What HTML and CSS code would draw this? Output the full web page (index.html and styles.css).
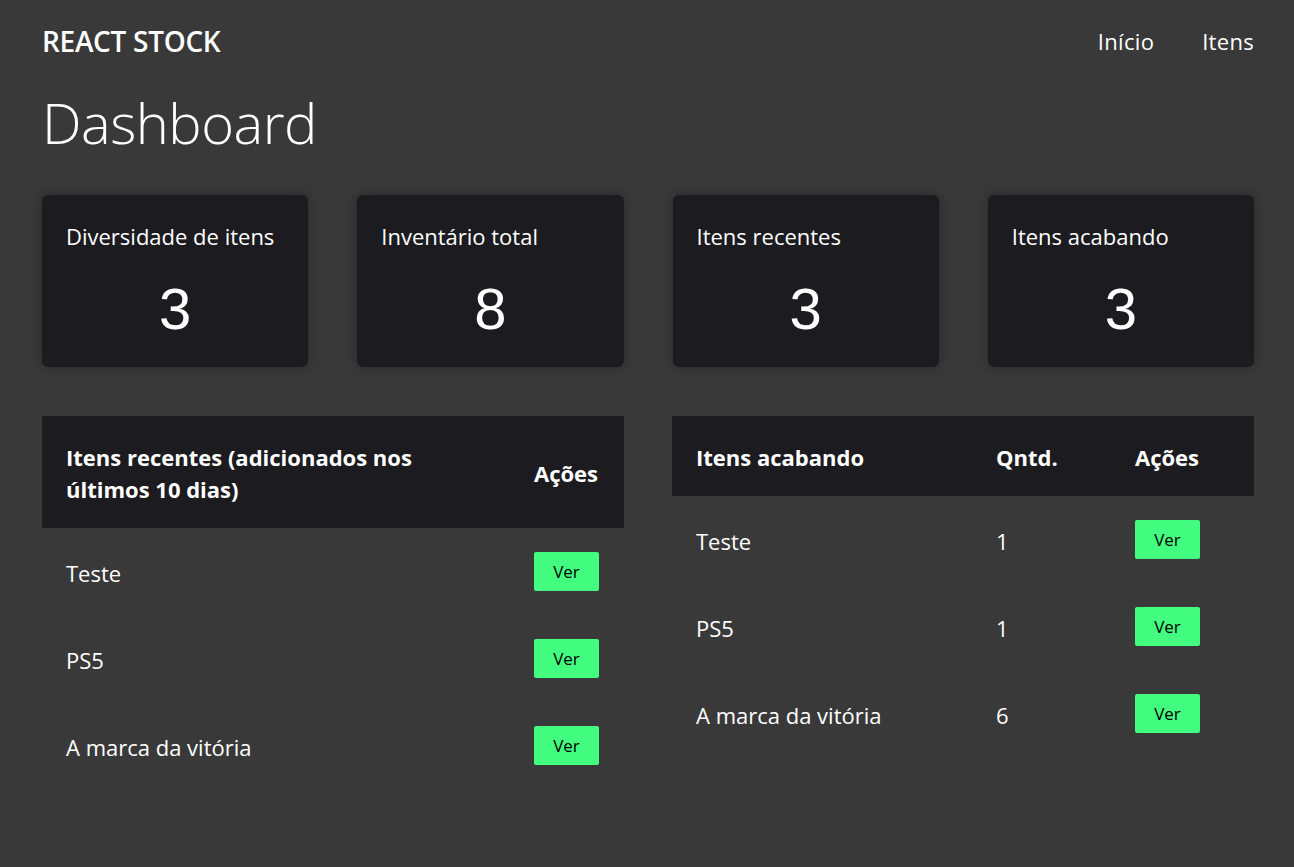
FILE: index.html
```html
<!DOCTYPE html>
<html lang="pt-BR">
<head>
<meta charset="utf-8">
<title>React Stock</title>
<link rel="stylesheet" href="styles.css">
</head>
<body>
<div class="container">
  <header class="topbar">
    <div class="logo">REACT STOCK</div>
    <nav class="nav">
      <a href="#">Início</a>
      <a href="#">Itens</a>
    </nav>
  </header>
  <h1 class="title">Dashboard</h1>
  <section class="cards">
    <div class="card"><div class="card-title">Diversidade de itens</div><div class="card-num">3</div></div>
    <div class="card"><div class="card-title">Inventário total</div><div class="card-num">8</div></div>
    <div class="card"><div class="card-title">Itens recentes</div><div class="card-num">3</div></div>
    <div class="card"><div class="card-title">Itens acabando</div><div class="card-num">3</div></div>
  </section>
  <section class="tables">
    <table class="tbl">
      <thead><tr><th>Itens recentes (adicionados nos últimos 10 dias)</th><th class="act">Ações</th></tr></thead>
      <tbody>
        <tr><td>Teste</td><td class="act"><button class="btn">Ver</button></td></tr>
        <tr><td>PS5</td><td class="act"><button class="btn">Ver</button></td></tr>
        <tr><td>A marca da vitória</td><td class="act"><button class="btn">Ver</button></td></tr>
      </tbody>
    </table>
    <table class="tbl tbl-right">
      <thead><tr><th class="c1">Itens acabando</th><th class="c2">Qntd.</th><th class="c3">Ações</th></tr></thead>
      <tbody>
        <tr><td>Teste</td><td>1</td><td><button class="btn">Ver</button></td></tr>
        <tr><td>PS5</td><td>1</td><td><button class="btn">Ver</button></td></tr>
        <tr><td>A marca da vitória</td><td>6</td><td><button class="btn">Ver</button></td></tr>
      </tbody>
    </table>
  </section>
</div>
</body>
</html>
```
FILE: styles.css
```css
* { box-sizing: border-box; }
body {
  margin: 0;
  background: #393939;
  color: #ffffff;
  font-family: "Open Sans", "Noto Sans", sans-serif;
}
.container {
  padding: 0 40px 0 42px;
}
.topbar {
  height: 81px;
  display: flex;
  align-items: center;
  justify-content: space-between;
}
.logo {
  font-size: 28px;
  font-weight: 600;
  letter-spacing: -0.3px;
}
.nav {
  display: flex;
  gap: 48px;
}
.nav a {
  color: #fff;
  text-decoration: none;
  font-size: 22px;
  letter-spacing: 0.3px;
}
.title {
  margin: 0;
  font-size: 56px;
  font-weight: 300;
  line-height: 82px;
  letter-spacing: -0.5px;
}
.cards {
  margin-top: 32px;
  display: grid;
  grid-template-columns: repeat(4, 1fr);
  gap: 49px;
}
.card {
  height: 172px;
  background: #1c1b1f;
  border-radius: 6px;
  box-shadow: 0 0 12px rgba(0, 0, 0, 0.3);
  padding: 25px 24px 0;
}
.card-title {
  font-size: 22px;
  line-height: 33px;
}
.card-num {
  margin-top: 21px;
  text-align: center;
  font-family: "Liberation Sans", Arial, sans-serif;
  font-size: 58px;
  line-height: 70px;
}
.tables {
  margin-top: 49px;
  display: grid;
  grid-template-columns: 1fr 1fr;
  gap: 48px;
  align-items: start;
}
.tbl {
  width: 100%;
  border-collapse: collapse;
  font-size: 22px;
}
.tbl th {
  background: #1c1b1f;
  text-align: left;
  font-weight: 700;
  padding: 25px 24px 23px;
  line-height: 32px;
}
.tbl td {
  padding: 25px 24px 23px;
  line-height: 32px;
  vertical-align: middle;
}
.tbl td .btn { margin-top: -1px; margin-bottom: 1px; }
.tbl .act { width: 114px; }
.tbl-right .c1 { width: 300px; }
.tbl-right .c2 { width: 139px; }
.btn {
  display: block;
  width: 65px;
  height: 39px;
  border: none;
  border-radius: 2px;
  background: #42fd7f;
  color: #000;
  font-family: "Open Sans", "Noto Sans", sans-serif;
  font-size: 17px;
  padding: 0;
}
```
